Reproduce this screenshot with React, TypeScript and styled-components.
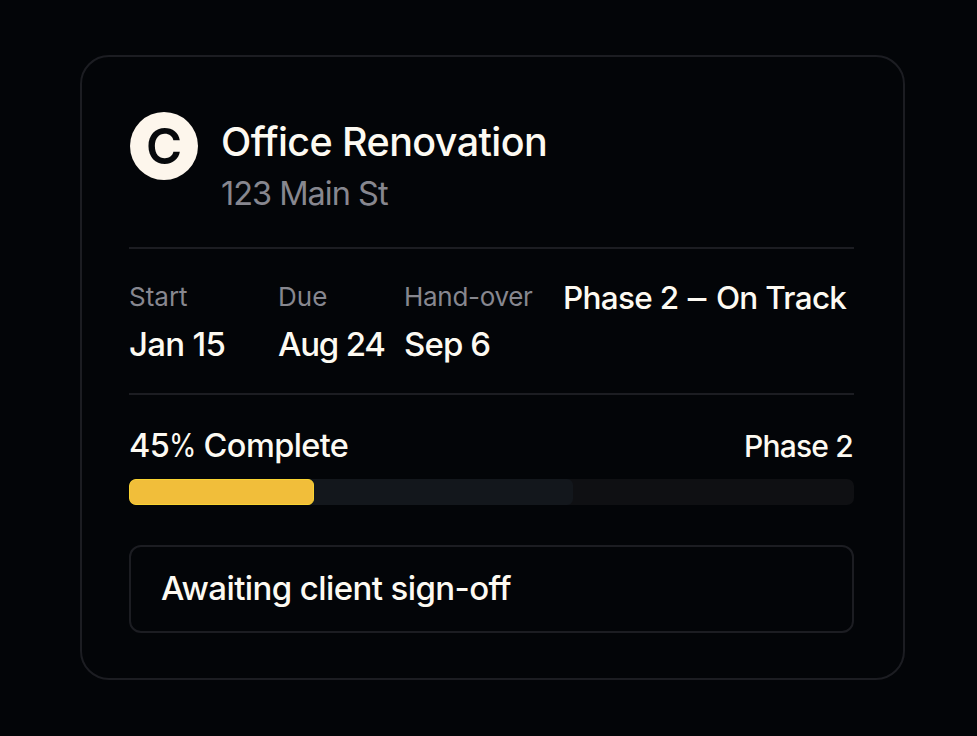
import React from 'react';
import styled, { createGlobalStyle } from 'styled-components';

const LINE = '#1c1d22';

const Global = createGlobalStyle`
  * { box-sizing: border-box; }
  body { margin: 0; background: #030508; font-family: Inter, "Liberation Sans", sans-serif; }
`;
const Page = styled.main`
  width: 977px; height: 736px; padding: 55px 0 0 80px; background: #030508; overflow: hidden;
`;
const Card = styled.article`
  width: 825px; height: 625px; padding: 0 49px 0 47px; border: 2px solid ${LINE}; border-radius: 29px;
`;
const Text = styled.span<{ $size: number; $muted?: boolean; $weight?: number; $track?: number }>`
  display: block; white-space: nowrap; line-height: 40px;
  font-size: ${p => p.$size}px;
  font-weight: ${p => p.$weight ?? 500};
  letter-spacing: ${p => p.$track ?? 0}px;
  color: ${p => (p.$muted ? '#87878f' : '#fdfaf2')};
`;
const Percent = styled.span`
  display: inline-block; font-weight: 400; transform: scaleX(0.86); transform-origin: left; margin-right: -5px;
`;
const Dash = styled.span`
  display: inline-block; transform: scaleX(1.18); margin: 0 4px 0 3px;
`;
const Header = styled.header`
  display: flex; height: 192px; padding: 55px 0 0 1px; border-bottom: 2px solid ${LINE};
`;
const Avatar = styled.div`
  width: 68px; height: 68px; margin-right: 23px; flex: none; border-radius: 50%;
  background: #fdf6ec; color: #07090c; text-align: center;
  font-size: 49px; font-weight: 600; line-height: 69px;
`;
const Titles = styled.div`padding-top: 10px;`;
const Address = styled.div`margin-top: 12px;`;
const Dates = styled.section`
  display: grid; grid-template-columns: 149px 126px 159px 1fr; height: 146px; padding-top: 28px;
  border-bottom: 2px solid ${LINE};
`;
const DateItem = styled.div`display: grid; grid-template-rows: 47px 40px; align-content: start;`;
const Status = styled.div`padding-top: 1px;`;
const ProgressHead = styled.div`display: flex; justify-content: space-between; padding: 31px 1px 0 0; height: 84px;`;
const Track = styled.div`display: flex; height: 26px; border-radius: 7px; background: #0f1013; overflow: hidden;`;
const Planned = styled.div`width: 444px; background: #13171c; border-radius: 6px;`;
const Done = styled.div`
  width: 185px; height: 26px; border-radius: 6px; background: #f1be3a; border: 1px solid #f9d331;
`;
const Notice = styled.div`
  margin-top: 40px; height: 88px; padding: 21px 30px; border: 2px solid ${LINE}; border-radius: 12px;
`;

export default function App() {
  return (
    <>
      <Global />
      <Page>
        <Card>
          <Header>
            <Avatar>C</Avatar>
            <Titles>
              <Text $size={39.5} $track={-0.6}>Office Renovation</Text>
              <Address><Text $size={32.5} $weight={400} $track={-1} $muted>123 Main St</Text></Address>
            </Titles>
          </Header>
          <Dates>
            <DateItem><Text $size={26} $weight={400} $muted>Start</Text><Text $size={33} $track={-0.7}>Jan 15</Text></DateItem>
            <DateItem><Text $size={26} $weight={400} $muted>Due</Text><Text $size={33} $track={-1.2}>Aug 24</Text></DateItem>
            <DateItem><Text $size={26} $weight={400} $track={-0.3} $muted>Hand-over</Text><Text $size={33} $track={-0.9}>Sep 6</Text></DateItem>
            <Status><Text $size={31.5} $track={-0.7}>Phase 2 <Dash>–</Dash> On Track</Text></Status>
          </Dates>
          <ProgressHead>
            <Text $size={32.5} $track={-0.6}>45<Percent>%</Percent> Complete</Text>
            <Text $size={30} $track={-0.8}>Phase 2</Text>
          </ProgressHead>
          <Track><Planned><Done /></Planned></Track>
          <Notice><Text $size={33} $track={-0.6}>Awaiting client sign-off</Text></Notice>
        </Card>
      </Page>
    </>
  );
}
